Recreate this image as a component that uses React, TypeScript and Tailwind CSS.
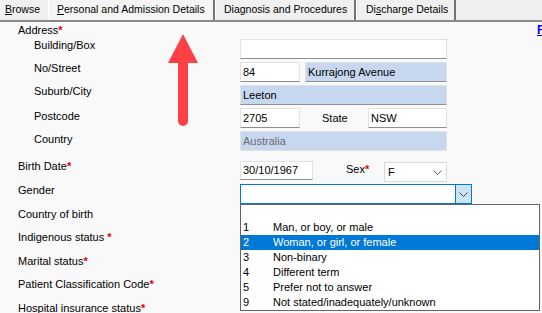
import React from "react";

function Star() {
  return <span className="text-[#e00000] font-bold">*</span>;
}

function Label({ h, indent, children }: { h: string; indent?: boolean; children: React.ReactNode }) {
  return (
    <div className={`${h} leading-[14px] whitespace-nowrap ${indent ? "pl-[34px]" : "pl-[18px]"}`}>
      {children}
    </div>
  );
}

function Box({ w, blue, gray, children }: { w: string; blue?: boolean; gray?: boolean; children?: React.ReactNode }) {
  return (
    <div
      className={`${w} h-[20px] shrink-0 flex items-center pl-[2px] border border-[#e2e2e2] ${
        gray ? "" : "border-b-[#8f8f8f]"
      } ${blue ? "bg-[#c6d7ef]" : "bg-white"} ${gray ? "text-[#6d6d6d]" : "text-black"} whitespace-nowrap overflow-hidden`}
    >
      {children}
    </div>
  );
}

function Chevron({ color }: { color: string }) {
  return (
    <svg width="9" height="5" viewBox="0 0 9 5" fill="none">
      <path d="M0.5 0.5 L4.5 4.5 L8.5 0.5" stroke={color} strokeWidth="1" />
    </svg>
  );
}

const items: [string, string][] = [
  ["1", "Man, or boy, or male"],
  ["2", "Woman, or girl, or female"],
  ["3", "Non-binary"],
  ["4", "Different term"],
  ["5", "Prefer not to answer"],
  ["9", "Not stated/inadequately/unknown"],
];

export default function App() {
  return (
    <div className="relative w-[542px] h-[313px] overflow-hidden bg-[#f9f9f9] text-[11px] text-black font-['Liberation_Sans',Arial,sans-serif]">
      {/* Tab bar */}
      <div className="flex h-[22px] bg-[#f0f0f0] border-b-2 border-[#8a8a8a] text-[10.5px] leading-[18px] whitespace-nowrap">
        <div className="w-[48px] pl-[5px]">
          <span className="underline">B</span>rowse
        </div>
        <div className="w-[167px] pl-[8px] border-l border-l-white border-r-2 border-r-[#737373] bg-[#f4f4f4]">
          <span className="underline">P</span>ersonal and Admission Details
        </div>
        <div className="w-[141px] pl-[8px] border-l border-l-white border-r-2 border-r-[#737373]">
          Diagnosis and Procedures
        </div>
        <div className="w-[100px] pl-[9px] border-l border-l-white border-r-2 border-r-[#737373]">
          Di<span className="underline">s</span>charge Details
        </div>
      </div>

      {/* Body */}
      <div className="flex">
        <div className="w-[240px] shrink-0 pt-[1px]">
          <Label h="h-[15px]">
            Address<Star />
          </Label>
          <Label h="h-[23px]" indent>Building/Box</Label>
          <Label h="h-[23px]" indent>No/Street</Label>
          <Label h="h-[25px]" indent>Suburb/City</Label>
          <Label h="h-[23px]" indent>Postcode</Label>
          <Label h="h-[27px]" indent>Country</Label>
          <Label h="h-[24px]">
            Birth Date<Star />
          </Label>
          <Label h="h-[24px]">Gender</Label>
          <Label h="h-[23px]">Country of birth</Label>
          <Label h="h-[24px]">
            Indigenous status <Star />
          </Label>
          <Label h="h-[23px]">
            Marital status<Star />
          </Label>
          <Label h="h-[24px]">
            Patient Classification Code<Star />
          </Label>
          <Label h="h-[14px]">
            Hospital insurance status<Star />
          </Label>
        </div>

        <div className="w-[297px] shrink-0 pt-[17px] flex flex-col gap-[3px]">
          <Box w="w-[207px]" />
          <div className="flex gap-[5px]">
            <Box w="w-[60px]">84</Box>
            <Box w="w-[142px]" blue>Kurrajong Avenue</Box>
          </div>
          <Box w="w-[207px]" blue>Leeton</Box>
          <div className="flex items-center">
            <Box w="w-[60px]">2705</Box>
            <div className="w-[68px] pl-[22px] leading-[14px]">State</div>
            <Box w="w-[79px]">NSW</Box>
          </div>
          <Box w="w-[207px]" blue gray>Australia</Box>

          <div className="flex items-start h-[23px] mt-[7px]">
            <div className="w-[73px] h-[19px] flex items-center pl-[2px] border border-[#e2e2e2] border-b-[#8f8f8f] bg-white">
              30/10/1967
            </div>
            <div className="w-[71px] pl-[33px] leading-[14px] pt-[1px] whitespace-nowrap">
              Sex<Star />
            </div>
            <div className="w-[63px] h-[20px] mt-[1px] flex items-center justify-between pl-[3px] pr-[4px] border border-[#d9d9d9] bg-white">
              <span>F</span>
              <Chevron color="#606060" />
            </div>
          </div>

          <div className="relative -mt-[3px] w-[232px] h-[20px]">
            <div className="w-[232px] h-[20px] flex border border-[#0078d7] bg-white">
              <div className="flex-1" />
              <div className="w-[16px] h-full flex items-center justify-center bg-[#cce4f7] border-l border-[#0078d7]">
                <Chevron color="#404040" />
              </div>
            </div>
            <div className="absolute top-[20px] left-0 w-[300px] h-[107px] border border-[#646464] bg-white">
              <div className="h-[15px]" />
              {items.map(([n, t]) => (
                <div
                  key={n}
                  className={`h-[15px] flex items-center whitespace-nowrap ${
                    n === "2" ? "bg-[#0078d7] text-white" : "text-black"
                  }`}
                >
                  <span className="w-[32px] pl-[2px]">{n}</span>
                  <span>{t}</span>
                </div>
              ))}
            </div>
          </div>
        </div>

        <div className="pt-[1px] leading-[14px] text-[12px] font-bold text-[#0000ff] underline whitespace-nowrap">
          F
        </div>
      </div>

      {/* Annotation arrow */}
      <svg className="absolute left-[168px] top-[34px]" width="30" height="93" viewBox="0 0 30 93">
        <path d="M15 0 L30 29 L0 29 Z" fill="#fd4045" />
        <line x1="15" y1="28" x2="15" y2="87" stroke="#fd4045" strokeWidth="10" strokeLinecap="round" />
      </svg>
    </div>
  );
}
